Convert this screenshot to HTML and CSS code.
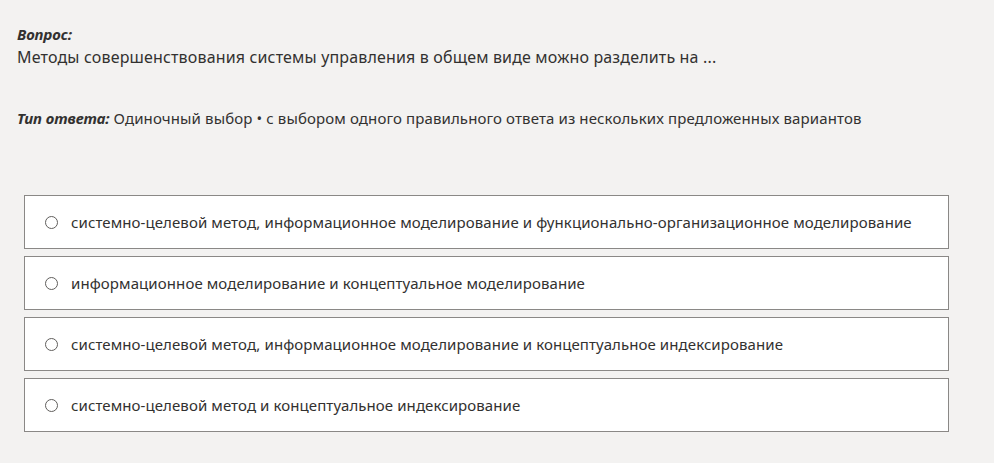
FILE: index.html
```html
<!DOCTYPE html>
<html lang="ru">
<head>
<meta charset="utf-8">
<link rel="stylesheet" href="styles.css">
</head>
<body>
<div class="page">
  <div class="question">
    <div class="label">Вопрос:</div>
    <div class="qtext">Методы совершенствования системы управления в общем виде можно разделить на ...</div>
  </div>
  <div class="type"><span class="label">Тип ответа:</span> Одиночный выбор • с выбором одного правильного ответа из нескольких предложенных вариантов</div>
  <div class="options">
    <label class="option"><span class="radio"></span><span class="otext">системно-целевой метод, информационное моделирование и функционально-организационное моделирование</span></label>
    <label class="option"><span class="radio"></span><span class="otext">информационное моделирование и концептуальное моделирование</span></label>
    <label class="option"><span class="radio"></span><span class="otext">системно-целевой метод, информационное моделирование и концептуальное индексирование</span></label>
    <label class="option"><span class="radio"></span><span class="otext">системно-целевой метод и концептуальное индексирование</span></label>
  </div>
</div>
</body>
</html>
```
FILE: styles.css
```css
html, body {
  margin: 0;
  padding: 0;
  background: #f3f2f1;
}
body {
  font-family: "Noto Sans", "Open Sans", sans-serif;
  color: #323130;
}
.page {
  padding: 24px 45px 0 17px;
}
.question {
  display: flex;
  flex-direction: column;
  gap: 2px;
}
.label {
  font-weight: 700;
  font-style: italic;
  font-size: 15px;
  line-height: 20px;
  letter-spacing: -0.1px;
}
.qtext {
  font-size: 16px;
  line-height: 22px;
  letter-spacing: 0.16px;
}
.type {
  margin-top: 40px;
  font-size: 15px;
  line-height: 20px;
  letter-spacing: 0.12px;
}
.options {
  margin: 67px 0 0 7px;
  display: flex;
  flex-direction: column;
  gap: 7px;
}
.option {
  display: flex;
  align-items: center;
  height: 52px;
  background: #fff;
  border: 1px solid #8a8886;
  padding-left: 20px;
  gap: 13px;
}
.radio {
  width: 11px;
  height: 11px;
  border: 1px solid #605e5c;
  border-radius: 50%;
  flex: none;
}
.otext {
  font-size: 15px;
  line-height: 20px;
  letter-spacing: 0.09px;
}
```
